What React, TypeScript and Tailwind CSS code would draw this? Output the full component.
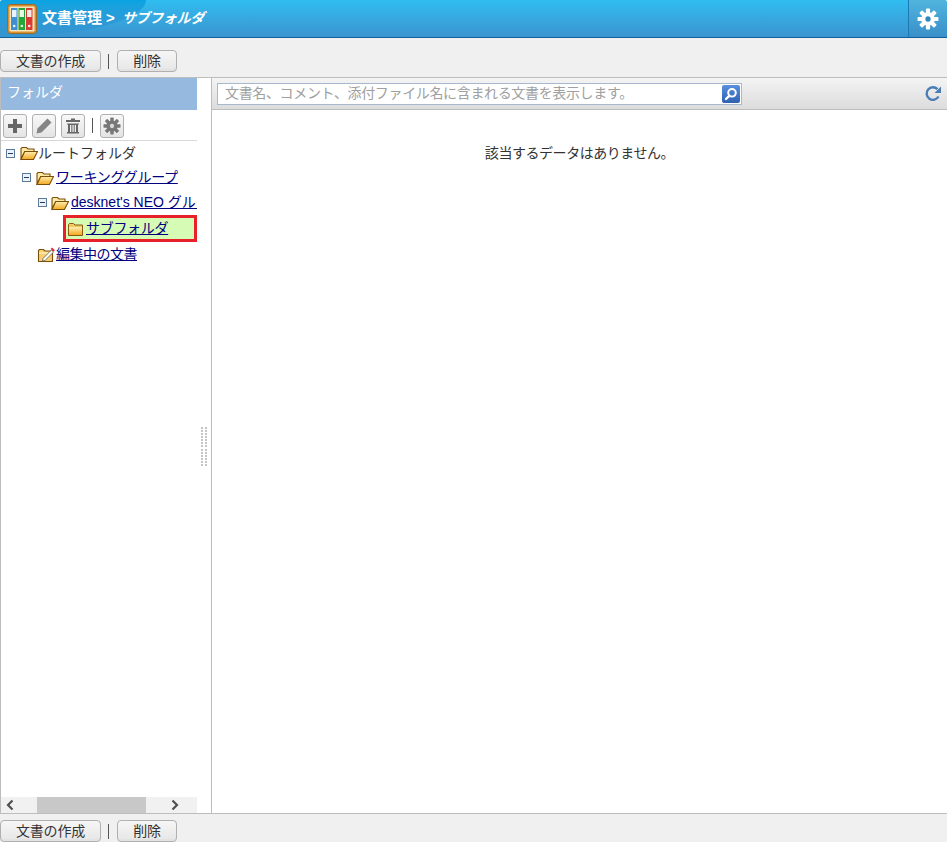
import React from "react";

const FONT = "[font-family:'Liberation_Sans','Noto_Sans_CJK_JP',sans-serif]";

function Folder({ open = true }: { open?: boolean }) {
  return (
    <svg width="18" height="16" viewBox="0 0 18 16" className="shrink-0">
      <defs>
        <linearGradient id="fg" x1="0" y1="0" x2="0" y2="1">
          <stop offset="0" stopColor="#ffeeb0" />
          <stop offset="1" stopColor="#f2a81f" />
        </linearGradient>
      </defs>
      {open ? (
        <>
          <path d="M1 13.500V3.500L2 2.500H6.500L8 4H14V6.500H5L1 13.500Z" fill="#fbe9a8" stroke="#7d4e06" strokeWidth="1.100" />
          <path d="M1 14.500L4.700 6.500H17.500L13.500 14.500H1Z" fill="url(#fg)" stroke="#7d4e06" strokeWidth="1.100" />
        </>
      ) : (
        <>
          <path d="M1.500 14.500V3.500L2.500 2.500H6.500L8 4H15.500V14.500H1.500Z" fill="#f0c860" stroke="#8a5a10" strokeWidth="1" />
          <rect x="2" y="6" width="13" height="8" fill="url(#fg)" />
        </>
      )}
    </svg>
  );
}

function EditFolder() {
  return (
    <svg width="19" height="17" viewBox="0 0 19 17" className="shrink-0">
      <path d="M1.500 15.500V4.500L2.500 3.500H6.500L8 5H15.500V15.500H1.500Z" fill="#f7cf72" stroke="#7d4e06" strokeWidth="1.100" />
      <path d="M2 7H15" stroke="#fff3c8" strokeWidth="1.200" />
      <path d="M6 12.500L14.500 4L16.500 6L8 14.500L5.500 15Z" fill="#fff" stroke="#6f6a5a" strokeWidth="0.900" />
      <path d="M15 1.500L18 4.300L16.400 5.600L13.600 3Z" fill="#e0303a" />
    </svg>
  );
}

function Minus() {
  return (
    <span className="flex h-[9px] w-[9px] shrink-0 items-center justify-center border border-[#5b7a9c] bg-[#eef2f6]">
      <span className="h-px w-[5px] bg-[#1f3f66]" />
    </span>
  );
}

function Btn({ w, children }: { w: string; children: React.ReactNode }) {
  return (
    <button
      className={`h-[22px] ${w} rounded-[4px] border border-[#b0b0b0] bg-gradient-to-b from-[#f6f6f6] to-[#e6e6e6] text-[14px] leading-[19px] tracking-[-0.2px] text-[#333] [box-shadow:inset_0_-2px_0_#e2e2e2]`}
    >
      {children}
    </button>
  );
}

function ActionBar() {
  return (
    <div className="flex items-center">
      <Btn w="w-[101px]">文書の作成</Btn>
      <span className="ml-[7px] mr-[8px] h-[15px] w-px bg-[#555]" />
      <Btn w="w-[60px]">削除</Btn>
    </div>
  );
}

function ToolBtn({ children }: { children: React.ReactNode }) {
  return (
    <span className="flex h-[24px] w-[24px] items-center justify-center rounded-[3px] border border-[#b0b0b0] bg-gradient-to-b from-[#f8f8f8] to-[#e4e4e4]">
      {children}
    </span>
  );
}

function Gear({ size, color, hole }: { size: number; color: string; hole: string }) {
  const teeth = [0, 45, 90, 135];
  return (
    <svg width={size} height={size} viewBox="0 0 20 20">
      {teeth.map((a) => (
        <rect key={a} x="8.100" y="0.500" width="3.800" height="19" rx="0.800" fill={color} transform={`rotate(${a} 10 10)`} />
      ))}
      <circle cx="10" cy="10" r="6.200" fill={color} />
      <circle cx="10" cy="10" r="2.400" fill={hole} />
    </svg>
  );
}

function Books() {
  return (
    <svg width="30" height="30" viewBox="0 0 30 30">
      <rect x="0.500" y="0.500" width="29" height="29" rx="3" fill="#d98f2b" stroke="#9c6a24" />
      <rect x="2.500" y="2.500" width="25" height="25" rx="1" fill="#f6e4bb" />
      <rect x="4" y="4" width="6.500" height="22" fill="#3f8fd2" />
      <rect x="11.500" y="4" width="6.500" height="22" fill="#22a83a" />
      <rect x="19" y="4" width="6.500" height="22" fill="#d83a34" />
      <rect x="5" y="6" width="4.500" height="7" fill="#e8f3fb" />
      <rect x="12.500" y="6" width="4.500" height="7" fill="#e8f8e8" />
      <rect x="20" y="6" width="4.500" height="7" fill="#fbe8e8" />
      <circle cx="7.200" cy="22" r="1.300" fill="#e8f3fb" />
      <circle cx="14.800" cy="22" r="1.300" fill="#e8f8e8" />
      <circle cx="22.200" cy="22" r="1.300" fill="#fbe8e8" />
    </svg>
  );
}

const linkCls = "text-[#000080] underline";

export default function App() {
  return (
    <div className={`flex h-[842px] w-[947px] flex-col overflow-hidden bg-[#f0f0f0] ${FONT}`}>
      {/* header */}
      <header className="relative flex h-[38px] shrink-0 items-stretch overflow-hidden rounded-t-[3px] border-b border-[#0e5f9c] bg-gradient-to-b from-[#2fbdf0] to-[#3b94cf]">
        <div className="absolute left-0 top-0 h-[37px] w-[146px] rounded-br-[146px_37px] bg-gradient-to-b from-[#08a4e2] to-[#3793cf]" />
        <div className="relative ml-[7px] flex items-center">
          <Books />
          <span className="ml-[5px] text-[15px] font-bold text-white">文書管理</span>
          <span className="ml-[4px] text-[15px] font-bold text-white">&gt;</span>
          <span className="ml-[8px] inline-block -skew-x-[16deg] text-[14px] font-bold tracking-[-0.3px] text-white">サブフォルダ</span>
        </div>
        <div className="relative ml-auto flex w-[39px] items-center justify-center border-l border-[#1c79b4] bg-gradient-to-b from-[#4fb4de] to-[#3b8fc9]">
          <Gear size={22} color="#ffffff" hole="#2f86bd" />
        </div>
      </header>

      {/* top actions */}
      <div className="flex h-[39px] shrink-0 items-end pb-[5px]">
        <ActionBar />
      </div>

      {/* main */}
      <div className="flex h-[737px] shrink-0 border-y border-[#bdbdbd] bg-white">
        {/* sidebar */}
        <aside className="relative flex w-[212px] shrink-0 flex-col border-x border-[#bdbdbd] pr-[14px]">
          <div className="flex h-[32px] shrink-0 items-center bg-[#95b9df] pb-[3px] pl-[6px] text-[14px] text-white">フォルダ</div>
          <div className="flex h-[31px] shrink-0 items-center gap-[5px] border-b border-[#d8d8d8] pl-[2px] pt-[1px]">
            <ToolBtn>
              <svg width="18" height="18" viewBox="0 0 18 18"><path d="M7 2h4v5h5v4h-5v5H7v-5H2V7h5z" fill="#666" /></svg>
            </ToolBtn>
            <ToolBtn>
              <svg width="18" height="18" viewBox="0 0 18 18"><path d="M12.500 1.500l4 4L6.500 15.500l-5 1 1-5z" fill="#858585" /></svg>
            </ToolBtn>
            <ToolBtn>
              <svg width="18" height="18" viewBox="0 0 18 18">
                <path d="M7 1.500h4v1.500h5v2H2V3h5z" fill="#666" />
                <path d="M3 6.500h12v1h-1V15h1v1.500H3V15h1V7.500H3z" fill="#666" />
                <path d="M6 8h1.300v7H6zM8.400 8h1.300v7H8.400zM10.700 8H12v7h-1.300z" fill="#eee" />
              </svg>
            </ToolBtn>
            <span className="mx-[2px] h-[15px] w-px bg-[#555]" />
            <ToolBtn>
              <Gear size={18} color="#777" hole="#d8d8d8" />
            </ToolBtn>
          </div>

          {/* tree */}
          <div className="flex min-h-0 flex-1 flex-col overflow-hidden text-[14px] text-[#333]">
            <div className="flex h-[24px] shrink-0 items-center whitespace-nowrap pl-[5px]">
              <Minus />
              <span className="ml-[5px]"><Folder /></span>
              <span>ルートフォルダ</span>
            </div>
            <div className="flex h-[25px] shrink-0 items-center whitespace-nowrap pl-[21px]">
              <Minus />
              <span className="ml-[5px]"><Folder /></span>
              <a className={`${linkCls} ml-[2px] tracking-[-0.3px]`}>ワーキンググループ</a>
            </div>
            <div className="flex h-[25px] shrink-0 items-center overflow-hidden whitespace-nowrap pl-[37px]">
              <Minus />
              <span className="ml-[4px]"><Folder /></span>
              <a className={`${linkCls} ml-[2px]`}>desknet's NEO グループ</a>
            </div>
            <div className="ml-[62px] flex h-[27px] shrink-0 items-center border-[3px] border-[#e8202a] bg-[#d6fbb4] pl-[1px]">
              <Folder open={false} />
              <a className={`${linkCls} ml-px tracking-[-0.3px]`}>サブフォルダ</a>
            </div>
            <div className="flex h-[25px] shrink-0 items-center whitespace-nowrap pl-[36px]">
              <EditFolder />
              <a className={`${linkCls} tracking-[-0.5px]`}>編集中の文書</a>
            </div>
          </div>

          {/* horizontal scrollbar */}
          <div className="flex h-[16px] shrink-0 items-center bg-[#f1f1f1]">
            <svg width="16" height="16" viewBox="0 0 16 16" className="ml-[1px]"><path d="M10.500 3.500L6 8l4.500 4.500" fill="none" stroke="#505050" strokeWidth="2.200" /></svg>
            <div className="ml-[19px] h-[16px] w-[109px] bg-[#c8c8c8]" />
            <svg width="16" height="16" viewBox="0 0 16 16" className="ml-[21px]"><path d="M5.500 3.500L10 8l-4.500 4.500" fill="none" stroke="#505050" strokeWidth="2.200" /></svg>
          </div>

          {/* resize handle */}
          <div className="absolute left-[200px] top-[349px] grid h-[39px] w-[6px] grid-cols-2 gap-x-[2px] gap-y-[1px]">
            {Array.from({ length: 26 }).map((_, i) => (
              <span key={i} className="h-[2px] w-[2px] bg-[#c4c4c4]" />
            ))}
          </div>
        </aside>

        {/* content */}
        <main className="flex min-w-0 flex-1 flex-col">
          <div className="flex h-[32px] shrink-0 items-center border-b border-[#bdbdbd] bg-gradient-to-b from-[#f4f4f4] to-[#dcdcdc] px-[5px]">
            <div className="flex h-[22px] w-[525px] items-center justify-between border border-[#a9b9cd] bg-white pl-[7px] pr-px">
              <span className="whitespace-nowrap text-[14px] tracking-[-0.35px] text-[#a0a0a0]">文書名、コメント、添付ファイル名に含まれる文書を表示します。</span>
              <span className="flex h-[18px] w-[18px] items-center justify-center rounded-[2px] bg-gradient-to-b from-[#5a8fe0] to-[#2f62b0]">
                <svg width="14" height="14" viewBox="0 0 14 14">
                  <circle cx="8" cy="5.800" r="3.800" fill="none" stroke="#fff" strokeWidth="2" />
                  <path d="M5.200 8.800L2 12" stroke="#fff" strokeWidth="2.400" strokeLinecap="round" />
                </svg>
              </span>
            </div>
            <svg width="18" height="18" viewBox="0 0 18 18" className="ml-auto">
              <path d="M14.500 11.500A6.300 6.300 0 1 1 13.500 4.200" fill="none" stroke="#4a7cb5" strokeWidth="2.400" />
              <path d="M17 1.500V8h-6.500z" fill="#4a7cb5" />
            </svg>
          </div>
          <div className="pt-[33px] text-center text-[14px] leading-[20px] tracking-[-0.45px] text-[#333]">該当するデータはありません。</div>
        </main>
      </div>

      {/* bottom actions */}
      <div className="flex flex-1 items-start pt-[6px]">
        <ActionBar />
      </div>
    </div>
  );
}
